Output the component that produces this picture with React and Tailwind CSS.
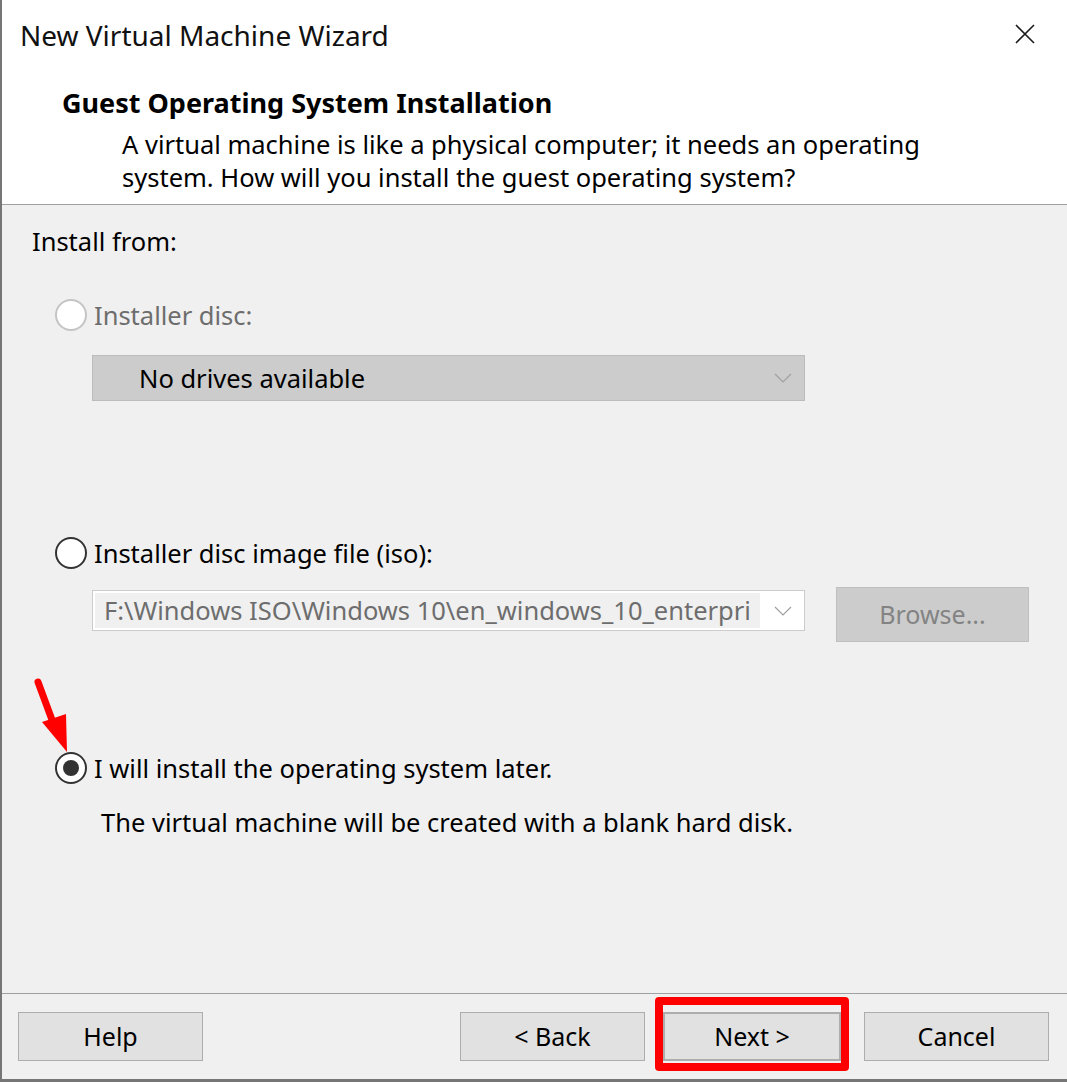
import React, { useState } from "react";

const font = { fontFamily: '"Noto Sans", "Open Sans", sans-serif' };

const Chevron = ({ className }) => (
  <svg width="18" height="10" viewBox="0 0 18 10" className={className}>
    <polyline points="1,1 9,9 17,1" fill="none" stroke="#a0a0a0" strokeWidth="1.2" />
  </svg>
);

const Radio = ({ state, onClick }) => {
  if (state === "disabled") {
    return <div className="w-8 h-8 rounded-full border-2 border-[#c4c4c4] bg-white shrink-0" />;
  }
  return (
    <div
      onClick={onClick}
      className="w-8 h-8 rounded-full border-2 border-[#333] bg-white shrink-0 flex items-center justify-center cursor-default"
    >
      {state === "checked" && <div className="w-4 h-4 rounded-full bg-[#333]" />}
    </div>
  );
};

const WizardButton = ({ children, className }) => (
  <button
    className={
      "h-[49px] bg-[#e1e1e1] border border-[#adadad] text-[25px] text-black flex items-center justify-center " +
      (className || "")
    }
  >
    {children}
  </button>
);

export default function App() {
  const [choice, setChoice] = useState("later");

  return (
    <div
      style={font}
      className="relative w-[1067px] h-[1082px] flex flex-col bg-[#f0f0f0] border-l-2 border-b-[3px] border-[#767676] text-black overflow-hidden"
    >
      {/* header */}
      <div className="h-[205px] shrink-0 bg-white border-b border-[#a0a0a0] relative">
        <div className="pl-[18px] pt-[17px] leading-[36px] text-[28px] text-[#111]">
          New Virtual Machine Wizard
        </div>
        <svg
          width="20"
          height="20"
          viewBox="0 0 20 20"
          className="absolute left-[1013px] top-[24px]"
        >
          <path d="M1 1 L19 19 M19 1 L1 19" stroke="#1a1a1a" strokeWidth="1.6" />
        </svg>
        <div className="pl-[60px] mt-[34px] leading-[32px] text-[27px] font-bold">
          Guest Operating System Installation
        </div>
        <div className="pl-[120px] mt-[9px] leading-[33px] text-[25.5px] whitespace-nowrap">
          A virtual machine is like a physical computer; it needs an operating
          <br />
          system. How will you install the guest operating system?
        </div>
      </div>

      {/* body */}
      <div className="flex-1 pl-[30px] pt-[20px] text-[25.5px]">
        <div className="leading-[32px]">Install from:</div>

        <div className="mt-[42px] ml-[23px] flex items-center gap-[7px] h-8">
          <Radio state="disabled" />
          <span className="text-[#6d6d6d]">Installer disc:</span>
        </div>
        <div className="mt-[24px] ml-[60px] w-[713px] h-[46px] bg-[#cccccc] border border-[#bcbcbc] flex items-center justify-between pl-[46px] pr-[12px]">
          <span>No drives available</span>
          <Chevron />
        </div>

        <div className="mt-[136px] ml-[23px] flex items-center gap-[7px] h-8">
          <Radio state={choice === "iso" ? "checked" : "off"} onClick={() => setChoice("iso")} />
          <span>Installer disc image file (iso):</span>
        </div>
        <div className="mt-[18px] ml-[60px] flex items-start gap-[31px]">
          <div className="mt-[3px] w-[713px] h-[41px] bg-white border border-[#cccccc] flex items-center pl-[2px] pr-[12px]">
            <div className="w-[665px] h-[35px] bg-[#f0f0f0] pl-[9px] overflow-hidden whitespace-nowrap text-[#6d6d6d] leading-[35px]">
              F:\Windows ISO\Windows 10\en_windows_10_enterpri
            </div>
            <Chevron className="ml-auto" />
          </div>
          <button className="w-[193px] h-[55px] bg-[#cccccc] border border-[#bfbfbf] text-[#838383] text-[25px]">
            Browse...
          </button>
        </div>

        <div className="mt-[110px] ml-[23px] flex items-center gap-[7px] h-8">
          <Radio state={choice === "later" ? "checked" : "off"} onClick={() => setChoice("later")} />
          <span>I will install the operating system later.</span>
        </div>
        <div className="mt-[22px] ml-[69px] leading-[32px]">
          The virtual machine will be created with a blank hard disk.
        </div>
      </div>

      {/* footer */}
      <div className="h-[86px] shrink-0 border-t border-[#a0a0a0] flex items-start pt-[18px] pl-[16px]">
        <WizardButton className="w-[185px]">Help</WizardButton>
        <WizardButton className="w-[185px] ml-[257px]">&lt; Back</WizardButton>
        <WizardButton className="w-[178px] ml-[18px] border-2 border-[#0078d7]">Next &gt;</WizardButton>
        <WizardButton className="w-[185px] ml-[23px]">Cancel</WizardButton>
      </div>

      {/* annotations */}
      <svg
        width="80"
        height="90"
        viewBox="0 0 80 90"
        className="absolute left-[-2px] top-[670px] pointer-events-none"
      >
        <line x1="38" y1="12" x2="55" y2="58" stroke="#ff0000" strokeWidth="7" strokeLinecap="round" />
        <polygon points="42,52 66,44 67,82" fill="#ff0000" />
      </svg>
      <div className="absolute left-[653px] top-[997px] w-[194px] h-[74px] border-[8px] border-[#ff0000] rounded-[4px] pointer-events-none" />
    </div>
  );
}
